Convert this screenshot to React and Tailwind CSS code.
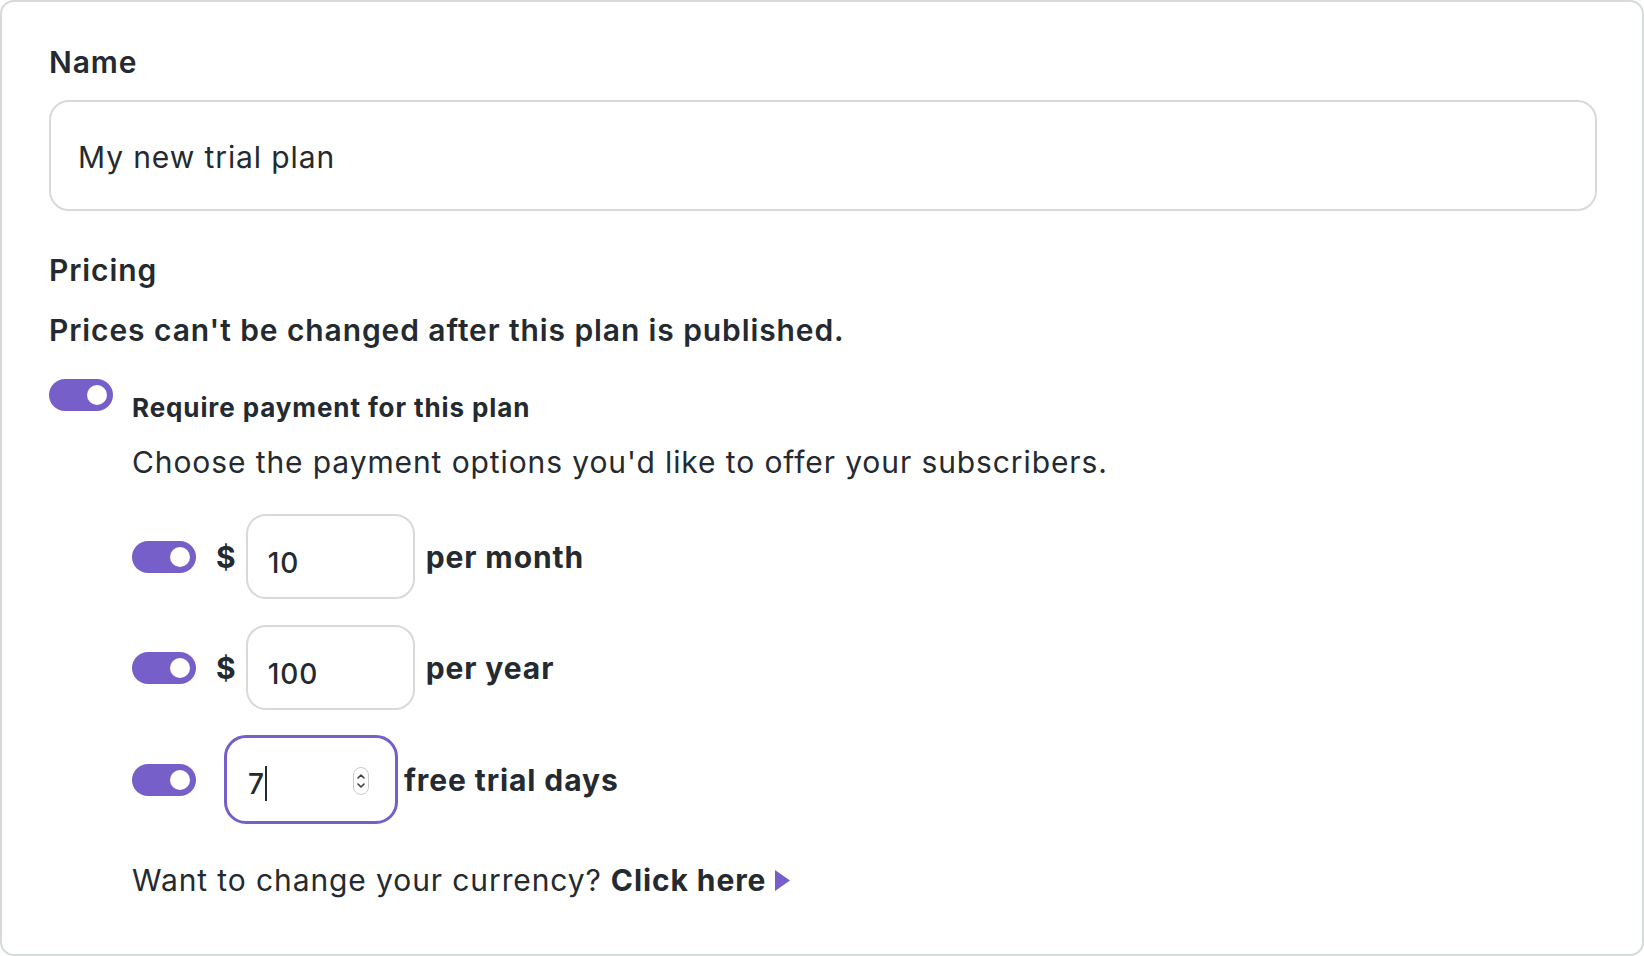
import React from "react";

function Toggle() {
  return (
    <div className="relative w-[64px] h-[32px] shrink-0 rounded-full bg-[#765fc9]">
      <div className="absolute right-[6px] top-[6px] w-[20px] h-[20px] rounded-full bg-white" />
    </div>
  );
}

function PriceRow({ value, label, className }) {
  return (
    <div className={"flex items-center " + className}>
      <Toggle />
      <span className="ml-[20px] text-[30px] font-bold leading-[36px]">$</span>
      <div className="ml-[10px] w-[169px] h-[85px] shrink-0 border-2 border-[#d6dada] rounded-[20px] flex items-center pl-[20px] pt-[12px] text-[28px] font-medium tracking-[0.9px]">
        {value}
      </div>
      <span className="ml-[11px] text-[30px] font-bold leading-[36px] tracking-[0.9px]">{label}</span>
    </div>
  );
}

export default function App() {
  return (
    <div
      className="w-[1644px] h-[956px] bg-white text-[#242a30]"
      style={{ fontFamily: "Inter, 'Noto Sans', sans-serif" }}
    >
      <div className="h-[956px] border-2 border-[#d6dada] rounded-[14px] pl-[47px] pr-[45px] pt-[42px]">
        <div className="text-[30px] font-semibold leading-[36px] tracking-[0.9px]">Name</div>
        <div className="mt-[20px] h-[111px] border-2 border-[#d6dada] rounded-[20px] flex items-center pl-[27px] pt-[4px] text-[30px] tracking-[0.9px]">
          My new trial plan
        </div>
        <div className="mt-[41px] text-[30px] font-semibold leading-[36px] tracking-[0.9px]">Pricing</div>
        <div className="mt-[24px] text-[30px] font-semibold leading-[36px] tracking-[0.9px]">
          Prices can't be changed after this plan is published.
        </div>
        <div className="mt-[31px] flex">
          <Toggle />
          <div className="ml-[19px] mt-[13px] flex flex-col">
            <div className="text-[26px] font-bold leading-[32px] tracking-[0.9px]">Require payment for this plan</div>
            <div className="mt-[20px] text-[30px] leading-[36px] tracking-[0.9px]">
              Choose the payment options you'd like to offer your subscribers.
            </div>
            <PriceRow value="10" label="per month" className="mt-[34px]" />
            <PriceRow value="100" label="per year" className="mt-[26px]" />
            <div className="flex items-center mt-[25px]">
              <Toggle />
              <div className="relative ml-[28px] w-[174px] h-[89px] shrink-0 border-[3px] border-[#765fc9] rounded-[22px] flex items-center pl-[21px] pt-[8px] text-[28px] font-medium">
                <span>7</span>
                <span className="ml-[1px] w-[2px] h-[35px] bg-[#242a30]" />
                <div className="absolute right-[26px] top-[29px] w-[16px] h-[28px] rounded-full border border-[#c9cdcd] bg-white flex flex-col items-center justify-center">
                  <svg width="10" height="22" viewBox="0 0 10 22" fill="none" stroke="#3a3f44" strokeWidth="1.6" strokeLinecap="round" strokeLinejoin="round">
                    <path d="M2 8 L5 5 L8 8" />
                    <path d="M2 14 L5 17 L8 14" />
                  </svg>
                </div>
              </div>
              <span className="ml-[6px] text-[30px] font-bold leading-[36px] tracking-[0.9px]">free trial days</span>
            </div>
            <div className="mt-[38px] text-[30px] leading-[36px] tracking-[0.9px] flex items-center">
              <span>Want to change your currency?</span>
              <span className="ml-[9px] font-bold">Click here</span>
              <svg className="ml-[9px]" width="15" height="21" viewBox="0 0 15 21">
                <path d="M0 0 L15 10.5 L0 21 Z" fill="#765fc9" />
              </svg>
            </div>
          </div>
        </div>
      </div>
    </div>
  );
}
